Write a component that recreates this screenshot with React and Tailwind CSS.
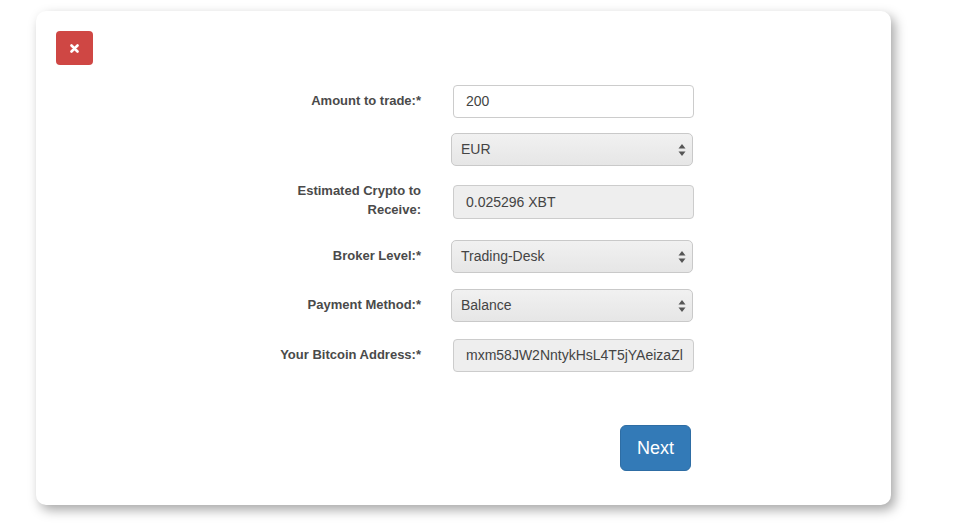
import React from "react";

const SelectArrows = () => (
  <svg width="8" height="14" viewBox="0 0 8 14" className="absolute right-[6px] top-1/2 -translate-y-1/2">
    <path d="M4 1 L7.5 5.5 L0.5 5.5 Z" fill="#555" />
    <path d="M4 13 L7.5 8.5 L0.5 8.5 Z" fill="#555" />
  </svg>
);

const FakeSelect = ({ value }) => (
  <div className="relative ml-[30px] w-[242px] h-[33px] rounded-[5px] border border-[#c9c9c9] bg-gradient-to-b from-[#f1f1f1] to-[#e6e6e6] flex items-center pl-[9px] text-[14px] text-[#444]">
    {value}
    <SelectArrows />
  </div>
);

const Label = ({ children, className = "" }) => (
  <div className={`w-[385px] text-right text-[13px] font-bold text-[#4a4a4a] leading-[19px] ${className}`}>
    {children}
  </div>
);

export default function App() {
  return (
    <div
      className="w-[959px] h-[528px] bg-white pl-[36px] pt-[11px]"
      style={{ fontFamily: '"Liberation Sans", Arial, sans-serif' }}
    >
      <div className="w-[855px] h-[494px] bg-white rounded-[10px] shadow-[4px_5px_12px_rgba(0,0,0,0.35)] pt-[20px] pl-[20px] flex flex-col">
        <button className="w-[37px] h-[34px] rounded-[4px] bg-[#cf4744] flex items-center justify-center">
          <svg width="9" height="9" viewBox="0 0 9 9">
            <path d="M1.5 1.5 L7.5 7.5 M7.5 1.5 L1.5 7.5" stroke="white" strokeWidth="2.6" strokeLinecap="round" />
          </svg>
        </button>

        <div className="-ml-[20px] mt-[20px] flex flex-col">
          {/* Amount */}
          <div className="flex items-center">
            <Label className="-mt-[2px]">Amount to trade:*</Label>
            <div className="ml-[32px] w-[241px] h-[33px] rounded-[4px] border border-[#cccccc] bg-white flex items-center pl-[12px] text-[14px] text-[#444]">
              200
            </div>
          </div>

          <div className="flex items-center mt-[15px]">
            <div className="w-[385px]" />
            <FakeSelect value="EUR" />
          </div>

          <div className="flex items-start mt-[19px] h-[34px]">
            <Label className="-mt-[4px]">
              Estimated Crypto to
              <br />
              Receive:
            </Label>
            <div className="ml-[32px] w-[241px] h-[34px] rounded-[4px] border border-[#cccccc] bg-[#eeeeee] flex items-center pl-[12px] text-[14px] text-[#444]">
              0.025296 XBT
            </div>
          </div>

          <div className="flex items-center mt-[21px]">
            <Label className="-mt-[2px]">Broker Level:*</Label>
            <FakeSelect value="Trading-Desk" />
          </div>

          <div className="flex items-center mt-[16px]">
            <Label className="-mt-[2px]">Payment Method:*</Label>
            <FakeSelect value="Balance" />
          </div>

          <div className="flex items-center mt-[17px]">
            <Label className="-mt-[2px]">Your Bitcoin Address:*</Label>
            <div className="ml-[32px] w-[241px] h-[33px] rounded-[4px] border border-[#cccccc] bg-[#eeeeee] flex items-center pl-[12px] text-[14px] text-[#444] overflow-hidden whitespace-nowrap">
              mxm58JW2NntykHsL4T5jYAeizaZl
            </div>
          </div>

          <div className="flex mt-[53px] pl-[584px]">
            <button className="w-[71px] h-[46px] rounded-[6px] bg-[#337ab7] border border-[#2e6da4] text-white text-[18px]">
              Next
            </button>
          </div>
        </div>
      </div>
    </div>
  );
}
